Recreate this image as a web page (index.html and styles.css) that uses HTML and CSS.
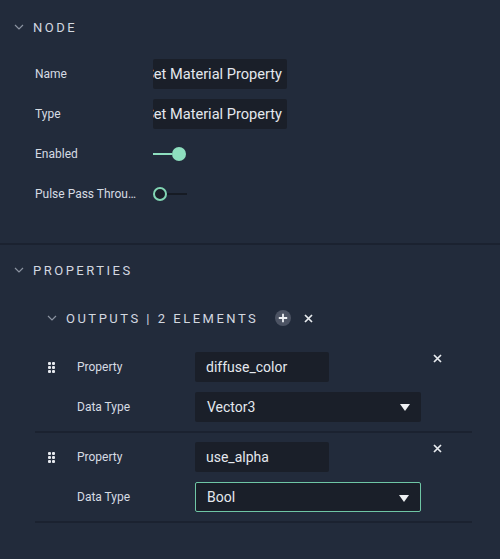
FILE: index.html
```html
<!DOCTYPE html>
<html>
<head>
<meta charset="utf-8">
<link rel="stylesheet" href="styles.css">
</head>
<body>
<div class="panel">
  <section class="section node">
    <div class="header">
      <svg class="chev" width="10" height="6" viewBox="0 0 10 6"><path d="M1 1 L5 5 L9 1" fill="none" stroke="#8b93a1" stroke-width="1.2"/></svg>
      <span class="title">NODE</span>
    </div>
    <div class="rows">
      <div class="row"><span class="label">Name</span><div class="field clip"><span>Set Material Property</span></div></div>
      <div class="row"><span class="label">Type</span><div class="field clip"><span>Set Material Property</span></div></div>
      <div class="row"><span class="label">Enabled</span>
        <div class="toggle on"><span class="track"></span><span class="knob"></span></div>
      </div>
      <div class="row"><span class="label">Pulse Pass Through</span>
        <div class="toggle off"><span class="knob"></span><span class="track"></span></div>
      </div>
    </div>
  </section>
  <div class="divider"></div>
  <section class="section props">
    <div class="header">
      <svg class="chev" width="10" height="6" viewBox="0 0 10 6"><path d="M1 1 L5 5 L9 1" fill="none" stroke="#8b93a1" stroke-width="1.2"/></svg>
      <span class="title">PROPERTIES</span>
    </div>
    <div class="subheader">
      <svg class="chev" width="10" height="6" viewBox="0 0 10 6"><path d="M1 1 L5 5 L9 1" fill="none" stroke="#8b93a1" stroke-width="1.2"/></svg>
      <span class="title">OUTPUTS | 2 ELEMENTS</span>
      <span class="plus"><svg width="16" height="16" viewBox="0 0 16 16"><circle cx="8" cy="8" r="8" fill="#4c5363"/><path d="M8 3.8 V12.2 M3.8 8 H12.2" stroke="#eef0f3" stroke-width="1.8"/></svg></span>
      <span class="x"><svg width="9" height="9" viewBox="0 0 9 9"><path d="M1 1 L8 8 M8 1 L1 8" stroke="#e8ebef" stroke-width="1.7"/></svg></span>
    </div>
    <div class="items">
      <div class="item">
        <span class="x remove"><svg width="9" height="9" viewBox="0 0 9 9"><path d="M1 1 L8 8 M8 1 L1 8" stroke="#e8ebef" stroke-width="1.7"/></svg></span>
        <div class="row">
          <span class="handle"><i></i><i></i><i></i><i></i><i></i><i></i></span>
          <span class="label">Property</span>
          <div class="field short">diffuse_color</div>
        </div>
        <div class="row">
          <span class="handle empty"></span>
          <span class="label">Data Type</span>
          <div class="field select">Vector3<span class="arrow"></span></div>
        </div>
      </div>
      <div class="item">
        <span class="x remove"><svg width="9" height="9" viewBox="0 0 9 9"><path d="M1 1 L8 8 M8 1 L1 8" stroke="#e8ebef" stroke-width="1.7"/></svg></span>
        <div class="row">
          <span class="handle"><i></i><i></i><i></i><i></i><i></i><i></i></span>
          <span class="label">Property</span>
          <div class="field short">use_alpha</div>
        </div>
        <div class="row">
          <span class="handle empty"></span>
          <span class="label">Data Type</span>
          <div class="field select focus">Bool<span class="arrow"></span></div>
        </div>
      </div>
    </div>
  </section>
</div>
</body>
</html>
```

FILE: styles.css
```css
html, body {
  margin: 0;
  padding: 0;
  background: #222b3b;
}
body {
  font-family: Roboto, "Noto Sans", sans-serif;
  color: #d6dbe3;
  width: 500px;
  height: 559px;
  overflow: hidden;
}
.panel {
  display: flex;
  flex-direction: column;
}
.header {
  display: flex;
  align-items: center;
  height: 50px;
  padding-left: 14px;
}
.node .header {
  height: 54px;
}
.chev {
  display: block;
  margin-right: 9px;
}
.title {
  font-size: 13px;
  letter-spacing: 2.5px;
  color: #d3d8e0;
  font-weight: 400;
}
.rows {
  padding-left: 35px;
}
.row {
  display: flex;
  align-items: center;
  height: 40px;
}
.label {
  font-size: 12px;
  width: 104px;
  margin-right: 14px;
  white-space: nowrap;
  overflow: hidden;
  text-overflow: ellipsis;
  color: #d6dbe3;
}
.field {
  box-sizing: border-box;
  height: 30px;
  background: #1a1f29;
  border-radius: 2px;
  font-size: 14px;
  color: #e4e8ee;
  display: flex;
  align-items: center;
  padding: 0 11px;
  white-space: nowrap;
}
.clip {
  width: 134px;
  overflow: hidden;
  justify-content: flex-end;
  padding: 0 5px 0 0;
  font-size: 14.6px;
}
.clip span {
  flex-shrink: 0;
}
.toggle {
  display: flex;
  align-items: center;
  width: 34px;
  height: 16px;
}
.toggle .track {
  display: block;
  height: 2px;
  flex: 1;
}
.toggle .knob {
  display: block;
  box-sizing: border-box;
  width: 14px;
  height: 14px;
  border-radius: 50%;
}
.toggle.on {
  width: 33px;
}
.toggle.on .track {
  background: #8edfbf;
}
.toggle.on .knob {
  background: #8edfbf;
}
.toggle.off .track {
  background: #161b24;
}
.toggle.off .knob {
  border: 2px solid #82d6b4;
  background: #1a1f29;
}
.divider {
  margin-top: 29px;
  height: 2px;
  background: #1b2230;
}
.subheader {
  display: flex;
  align-items: center;
  height: 46px;
  padding-left: 47px;
  margin-bottom: 2px;
}
.subheader .plus {
  display: block;
  margin-left: 17px;
  height: 16px;
}
.subheader .x {
  display: block;
  margin-left: 13px;
  height: 9px;
}
.subheader svg {
  display: block;
}
.items {
  margin-left: 35px;
  width: 437px;
}
.item {
  position: relative;
  padding: 4px 0;
  border-bottom: 2px solid #1b2230;
}
.handle {
  width: 42px;
  height: 10px;
  display: grid;
  grid-template-columns: 3px 3px;
  grid-auto-rows: 3px;
  column-gap: 1px;
  row-gap: 1px;
  padding-left: 13px;
  box-sizing: border-box;
  align-content: center;
}
.handle i {
  display: block;
  width: 3px;
  height: 3px;
  border-radius: 1px;
  background: #e6e9ee;
}
.field.short {
  width: 134px;
}
.field.select {
  width: 226px;
  position: relative;
  padding-left: 12px;
}
.field.focus {
  border: 1px solid #6fc6a5;
  padding-left: 11px;
}
.arrow {
  position: absolute;
  right: 11px;
  top: 12px;
  width: 0;
  height: 0;
  border-left: 5px solid transparent;
  border-right: 5px solid transparent;
  border-top: 7px solid #eef0f3;
}
.remove {
  position: absolute;
  top: 11px;
  right: 30px;
  display: block;
  height: 9px;
}
.remove svg {
  display: block;
}
```
